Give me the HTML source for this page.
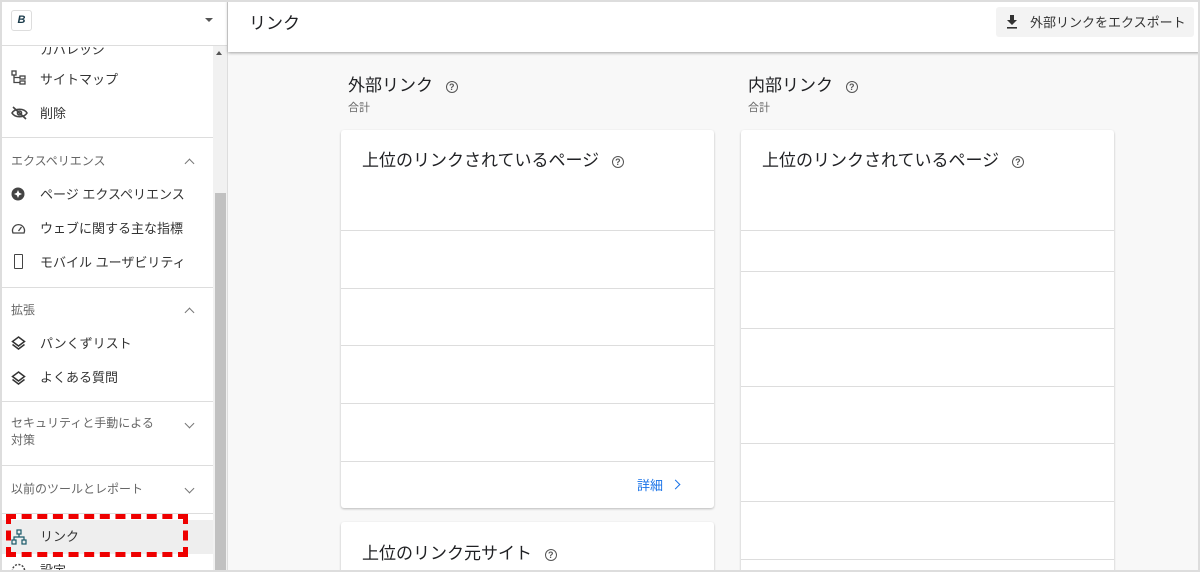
<!DOCTYPE html>
<html style="overflow:hidden;width:1200px;height:572px"><head><meta charset="utf-8"><style>
*{margin:0;padding:0;box-sizing:border-box}
body{width:1200px;height:572px;overflow:hidden;background:#f8f8f8;font-family:"Liberation Sans","Noto Sans CJK JP",sans-serif;color:#202124;position:relative}
.a{position:absolute}
.side{left:0;top:0;width:228px;height:572px;background:#fff;border-right:1px solid #ddd;overflow:hidden}
.it{position:absolute;left:40px;font-size:13px;color:#333}
.ic{position:absolute;left:11px}
.sec{position:absolute;left:11px;font-size:12px;color:#666}
.hr{position:absolute;left:0;width:213px;height:1px;background:#ddd}
.chev{position:absolute;left:186px;width:7px;height:7px;border-left:1.3px solid #777;border-top:1.3px solid #777}
.up{transform:rotate(45deg)}
.dn{transform:rotate(225deg)}
.card{position:absolute;background:#fff;border-radius:3px;box-shadow:0 1px 2px rgba(0,0,0,.25);overflow:hidden}
.ln{position:absolute;left:0;right:0;height:1px;background:#ddd}
.q{display:inline-block;width:12px;height:12px;border:1.3px solid #555;border-radius:50%;font-size:9px;line-height:10px;text-align:center;color:#555;font-weight:bold;vertical-align:middle}
</style></head><body>
<div class="a side">
 <div class="a" style="left:0;top:0;width:228px;height:46px;border-bottom:1px solid #ddd;background:#fff"></div>
 <div class="a" style="left:11px;top:10px;width:21px;height:21px;border:1px solid #ddd;border-radius:3px;font-size:11px;font-weight:bold;font-style:italic;color:#1a3a4a;text-align:center;line-height:19px">B</div>
 <div class="a" style="left:205px;top:18px;border-left:4px solid transparent;border-right:4px solid transparent;border-top:4px solid #555"></div>
 <div class="it" style="top:39px;clip-path:inset(8px 0 0 0)">カバレッジ</div>
 <svg class="ic" style="top:70px" width="16" height="16" viewBox="0 0 16 16" fill="none" stroke="#444" stroke-width="1.3"><rect x="1" y="1" width="4" height="4"/><rect x="9" y="6" width="5" height="3"/><rect x="9" y="11" width="5" height="3"/><path d="M3 5v7.5h6M3 7.5h6"/></svg>
 <div class="it" style="top:69px">サイトマップ</div>
 <svg class="ic" style="top:106px" width="17" height="14" viewBox="0 0 17 14" fill="none" stroke="#444" stroke-width="1.6"><path d="M1 7c3-5 12-5 15 0c-3 5-12 5-15 0z"/><circle cx="8.5" cy="7" r="2"/><path d="M2 1l13 12"/></svg>
 <div class="it" style="top:103px">削除</div>
 <div class="hr" style="top:137px"></div>
 <div class="sec" style="top:152px">エクスペリエンス</div><div class="chev up" style="top:160px"></div>
 <svg class="ic" style="top:187px" width="14" height="14" viewBox="0 0 14 14"><circle cx="7" cy="7" r="6.5" fill="#444"/><path d="M7 3l1.2 2.8L11 7 8.2 8.2 7 11 5.8 8.2 3 7 5.8 5.8z" fill="#fff"/></svg>
 <div class="it" style="top:184px">ページ エクスペリエンス</div>
 <svg class="ic" style="top:222px" width="15" height="13" viewBox="0 0 15 13" fill="none" stroke="#444" stroke-width="1.3"><path d="M2 11a6 6 0 1 1 11 0z"/><path d="M7.5 9l3-4"/></svg>
 <div class="it" style="top:218px">ウェブに関する主な指標</div>
 <div class="ic" style="left:14px;top:254px;width:9px;height:15px;border:1.5px solid #444;border-radius:1px"></div>
 <div class="it" style="top:252px">モバイル ユーザビリティ</div>
 <div class="hr" style="top:287px"></div>
 <div class="sec" style="top:301px">拡張</div><div class="chev up" style="top:309px"></div>
 <svg class="ic" style="top:336px" width="15" height="14" viewBox="0 0 15 14" fill="none" stroke="#333" stroke-width="1.5"><path d="M7.5 1l6 4.5-6 4.5-6-4.5z"/><path d="M1.5 8.5l6 4.5 6-4.5"/></svg>
 <div class="it" style="top:333px">パンくずリスト</div>
 <svg class="ic" style="top:371px" width="15" height="14" viewBox="0 0 15 14" fill="none" stroke="#333" stroke-width="1.5"><path d="M7.5 1l6 4.5-6 4.5-6-4.5z"/><path d="M1.5 8.5l6 4.5 6-4.5"/></svg>
 <div class="it" style="top:367px">よくある質問</div>
 <div class="hr" style="top:401px"></div>
 <div class="sec" style="top:415px;line-height:17px">セキュリティと手動による<br>対策</div><div class="chev dn" style="top:420px"></div>
 <div class="hr" style="top:465px"></div>
 <div class="sec" style="top:480px">以前のツールとレポート</div><div class="chev dn" style="top:485px"></div>
 <div class="hr" style="top:513px"></div>
 <div class="a" style="left:0;top:520px;width:213px;height:34px;background:#eee"></div>
 <svg class="ic" style="top:529px" width="16" height="16" viewBox="0 0 16 16" fill="none" stroke="#1a5a6a" stroke-width="1.2"><rect x="6" y="1" width="4" height="4"/><rect x="1" y="11" width="4" height="4"/><rect x="11" y="11" width="4" height="4"/><path d="M8 5v3H3v3M8 8h5v3"/></svg>
 <div class="it" style="top:526px">リンク</div>
 <div class="it" style="top:560px">設定</div>
 <svg class="ic" style="top:563px" width="15" height="15" viewBox="0 0 15 15"><circle cx="7.5" cy="7.5" r="6" fill="none" stroke="#444" stroke-width="1.5" stroke-dasharray="2 1.5"/></svg>
 <div class="a" style="left:6px;top:514px;width:182px;height:43px;border:5px dashed #e00"></div>
 <div class="a" style="left:213px;top:46px;width:14px;height:526px;background:#f1f1f1"></div>
 <div class="a" style="left:216px;top:51px;border-left:3px solid transparent;border-right:3px solid transparent;border-bottom:4px solid #555"></div>
 <div class="a" style="left:215px;top:193px;width:11px;height:379px;background:#c1c1c1"></div>
</div>
<div class="a" style="left:228px;top:0;width:972px;height:52px;background:#fff;box-shadow:0 1px 3px rgba(0,0,0,.35)"></div>
<div class="a" style="left:249px;top:9px;font-size:17px">リンク</div>
<div class="a" style="left:996px;top:7px;width:198px;height:30px;background:#f3f3f3;border-radius:3px"></div>
<svg class="a" style="left:1006px;top:14px" width="12" height="16" viewBox="0 0 12 16"><path d="M4 1h4v5h3L6 11 1 6h3z" fill="#333"/><rect x="1" y="13" width="10" height="1.6" fill="#333"/></svg>
<div class="a" style="left:1030px;top:12px;font-size:13px;color:#333">外部リンクをエクスポート</div>
<div class="a" style="left:348px;top:71px;font-size:17px">外部リンク <span class="q" style="margin-left:8px">?</span></div>
<div class="a" style="left:348px;top:99px;font-size:11px;color:#666">合計</div>
<div class="a" style="left:748px;top:71px;font-size:17px">内部リンク <span class="q" style="margin-left:8px">?</span></div>
<div class="a" style="left:748px;top:99px;font-size:11px;color:#666">合計</div>
<div class="card" style="left:341px;top:130px;width:373px;height:378px">
 <div class="a" style="left:21px;top:16px;font-size:17px">上位のリンクされているページ <span class="q" style="margin-left:8px">?</span></div>
 <div class="ln" style="top:100px"></div><div class="ln" style="top:158px"></div><div class="ln" style="top:215px"></div><div class="ln" style="top:273px"></div><div class="ln" style="top:331px"></div>
 <div class="a" style="left:296px;top:345px;font-size:13px;color:#1a73e8">詳細</div>
 <div class="a" style="left:331px;top:351px;width:7px;height:7px;border-right:1.6px solid #1a73e8;border-top:1.6px solid #1a73e8;transform:rotate(45deg)"></div>
</div>
<div class="card" style="left:341px;top:522px;width:373px;height:50px;border-radius:3px 3px 0 0">
 <div class="a" style="left:21px;top:17px;font-size:17px">上位のリンク元サイト <span class="q" style="margin-left:8px">?</span></div>
</div>
<div class="card" style="left:741px;top:130px;width:373px;height:442px;border-radius:3px 3px 0 0">
 <div class="a" style="left:21px;top:16px;font-size:17px">上位のリンクされているページ <span class="q" style="margin-left:8px">?</span></div>
 <div class="ln" style="top:100px"></div><div class="ln" style="top:141px"></div><div class="ln" style="top:198px"></div><div class="ln" style="top:256px"></div><div class="ln" style="top:313px"></div><div class="ln" style="top:371px"></div><div class="ln" style="top:429px"></div>
</div>
<div class="a" style="left:0;top:0;width:1200px;height:572px;border:2px solid #ddd;pointer-events:none"></div>
</body></html>
